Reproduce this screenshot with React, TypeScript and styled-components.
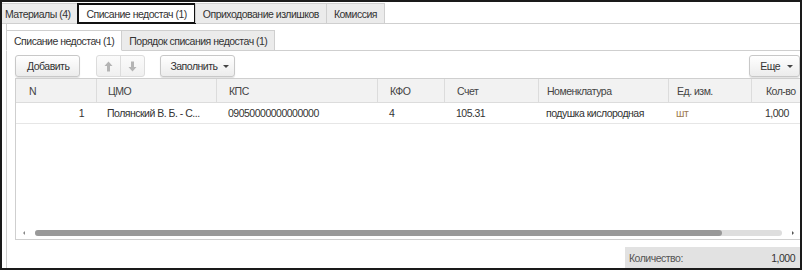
import styled, { createGlobalStyle } from "styled-components";

const GlobalStyle = createGlobalStyle`
  body {
    margin: 0;
    font-family: "Liberation Sans", Arial, sans-serif;
    font-size: 10.5px;
    letter-spacing: -0.5px;
    color: #333;
    background: #fff;
  }
`;

const Frame = styled.div`
  width: 798px;
  height: 266px;
  border: 2px solid #1a1a1a;
  display: flex;
  flex-direction: column;
  overflow: hidden;
`;

const TopTabs = styled.div`
  display: flex;
  align-items: flex-end;
  height: 21px;
  border-bottom: 1px solid #cfcfcf;
`;

const Tab = styled.div<{ $active?: boolean; $focus?: boolean; $padLeft?: number }>`
  height: ${(p) => (p.$focus ? "17px" : "19px")};
  display: flex;
  align-items: center;
  padding: 0 7px 0 ${(p) => (p.$padLeft ?? 7)}px;
  margin-bottom: ${(p) => (p.$active ? "-1px" : "0")};
  background: ${(p) => (p.$active ? "#fff" : "#ebebeb")};
  border: ${(p) => (p.$focus ? "2px solid #111" : "1px solid #cfcfcf")};
  border-bottom: ${(p) => (p.$focus ? "2px solid #111" : p.$active ? "1px solid #fff" : "none")};
  border-left-width: ${(p) => (p.$padLeft !== undefined ? "0" : undefined)};
  margin-right: -1px;
  white-space: nowrap;
  color: #333;
`;

const Panel = styled.div`
  flex: 1;
  margin-left: 4px;
  border-left: 1px solid #cfcfcf;
  display: flex;
  flex-direction: column;
  min-height: 0;
`;

const SubTabs = styled.div`
  display: flex;
  align-items: flex-end;
  height: 26px;
  border-bottom: 1px solid #cfcfcf;
  margin-left: -1px;
`;

const Body = styled.div`
  flex: 1;
  display: flex;
  flex-direction: column;
  padding: 4px 0 0 8px;
`;

const Toolbar = styled.div`
  display: flex;
  align-items: center;
  gap: 16px;
  height: 22px;
  margin-bottom: 1px;
`;

const Button = styled.div`
  height: 20px;
  box-sizing: content-box;
  display: flex;
  align-items: center;
  gap: 7px;
  padding: 0 10px 0 11px;
  border: 1px solid #c8c8c8;
  border-radius: 3px;
  background: linear-gradient(#ffffff, #ececec);
  box-shadow: 0 1px 1px rgba(0, 0, 0, 0.12);
  color: #333;
  white-space: nowrap;
`;

const MenuButton = styled(Button)`
  gap: 6px;
  padding: 0 5px 0 9px;
  margin-left: -1px;
`;

const MoreButton = styled(Button)`
  margin-left: auto;
  padding: 0 6px 0 10px;
`;

const Caret = styled.span`
  width: 0;
  height: 0;
  border-left: 3px solid transparent;
  border-right: 3px solid transparent;
  border-top: 3px solid #444;
`;

const ArrowGroup = styled.div`
  display: flex;
  height: 20px;
  border: 1px solid #dcdcdc;
  border-radius: 3px;
  background: linear-gradient(#fbfbfb, #f0f0f0);
`;

const ArrowCell = styled.div<{ $first?: boolean }>`
  width: 23px;
  display: flex;
  align-items: center;
  justify-content: center;
  border-right: ${(p) => (p.$first ? "1px solid #dcdcdc" : "none")};
`;

const Table = styled.div`
  height: 160px;
  border: 1px solid #cfcfcf;
  border-right: none;
  display: flex;
  flex-direction: column;
`;

const cols = "80px 120px 161px 67px 94px 130px 83px 1fr";

const HeadRow = styled.div`
  display: grid;
  grid-template-columns: ${cols};
  height: 23px;
  background: #f2f2f2;
  border-bottom: 1px solid #dcdcdc;
`;

const HeadCell = styled.div<{ $pad: number }>`
  display: flex;
  align-items: center;
  padding-left: ${(p) => p.$pad}px;
  border-left: 1px solid #dcdcdc;
  color: #444;
  white-space: nowrap;
  &:first-child {
    border-left: none;
  }
`;

const DataRow = styled.div`
  display: grid;
  grid-template-columns: ${cols};
  height: 20px;
  border-bottom: 1px solid #e6e6e6;
`;

const Cell = styled.div<{ $pad: number; $right?: boolean; $unit?: boolean }>`
  display: flex;
  align-items: center;
  justify-content: ${(p) => (p.$right ? "flex-end" : "flex-start")};
  padding: 0 ${(p) => (p.$right ? 12 : 0)}px 0 ${(p) => (p.$right ? 0 : p.$pad)}px;
  color: ${(p) => (p.$unit ? "#9c7a4e" : "#333")};
  white-space: nowrap;
  overflow: hidden;
`;

const Spacer = styled.div`
  flex: 1;
`;

const ScrollBar = styled.div`
  height: 7px;
  margin: 0 0 3px;
  display: flex;
  align-items: center;
  padding: 0 6px 0 7px;
`;

const ScrollArrow = styled.span<{ $dir: "left" | "right" }>`
  width: 0;
  height: 0;
  border-top: 2px solid transparent;
  border-bottom: 2px solid transparent;
  ${(p) => (p.$dir === "left" ? "border-right: 2px solid #888;" : "border-left: 2px solid #555;")}
`;

const Track = styled.div`
  flex: 1;
  height: 6px;
  margin: 0 10px;
  border-radius: 3px;
  background: #dedede;
  display: flex;
`;

const Thumb = styled.div`
  height: 6px;
  border-radius: 3px;
  background: #999;
`;

const Footer = styled.div`
  margin-top: 7px;
  display: flex;
  justify-content: flex-end;
  flex: 1;
`;

const TotalBox = styled.div`
  width: 166px;
  display: flex;
  align-items: center;
  justify-content: space-between;
  padding: 0 5px 0 4px;
  background: #e2e2e2;
  color: #555;
`;

const TotalValue = styled.span`
  color: #333;
`;

function Arrow({ up }: { up?: boolean }) {
  return (
    <svg width="9" height="11" viewBox="0 0 9 11">
      <path
        d="M4.5 0.5 L8.5 5 L6 5 L6 10.5 L3 10.5 L3 5 L0.5 5 Z"
        fill="#b4b4b4"
        transform={up ? undefined : "rotate(180 4.5 5.5)"}
      />
    </svg>
  );
}

const columns = [
  { title: "N", pad: 13, value: "1", right: true },
  { title: "ЦМО", pad: 11, value: "Полянский В. Б. - С..." },
  { title: "КПС", pad: 12, value: "09050000000000000" },
  { title: "КФО", pad: 12, value: "4" },
  { title: "Счет", pad: 12, value: "105.31" },
  { title: "Номенклатура", pad: 8, value: "подушка кислородная" },
  { title: "Ед. изм.", pad: 8, value: "шт", unit: true },
  { title: "Кол-во", pad: 14, value: "1,000" },
];

export default function App() {
  return (
    <>
      <GlobalStyle />
      <Frame>
        <TopTabs>
          <Tab $padLeft={3}>Материалы (4)</Tab>
          <Tab $active $focus>Списание недостач (1)</Tab>
          <Tab>Оприходование излишков</Tab>
          <Tab>Комиссия</Tab>
        </TopTabs>
        <Panel>
          <SubTabs>
            <Tab $active>Списание недостач (1)</Tab>
            <Tab>Порядок списания недостач (1)</Tab>
          </SubTabs>
          <Body>
            <Toolbar>
              <Button>Добавить</Button>
              <ArrowGroup>
                <ArrowCell $first>
                  <Arrow up />
                </ArrowCell>
                <ArrowCell>
                  <Arrow />
                </ArrowCell>
              </ArrowGroup>
              <MenuButton>
                Заполнить <Caret />
              </MenuButton>
              <MoreButton>
                Еще <Caret />
              </MoreButton>
            </Toolbar>
            <Table>
              <HeadRow>
                {columns.map((c) => (
                  <HeadCell key={c.title} $pad={c.pad}>
                    {c.title}
                  </HeadCell>
                ))}
              </HeadRow>
              <DataRow>
                {columns.map((c) => (
                  <Cell key={c.title} $pad={c.pad} $right={c.right} $unit={c.unit}>
                    {c.value}
                  </Cell>
                ))}
              </DataRow>
              <Spacer />
              <ScrollBar>
                <ScrollArrow $dir="left" />
                <Track>
                  <Thumb style={{ width: "92%" }} />
                </Track>
                <ScrollArrow $dir="right" />
              </ScrollBar>
            </Table>
            <Footer>
              <TotalBox>
                Количество:
                <TotalValue>1,000</TotalValue>
              </TotalBox>
            </Footer>
          </Body>
        </Panel>
      </Frame>
    </>
  );
}
